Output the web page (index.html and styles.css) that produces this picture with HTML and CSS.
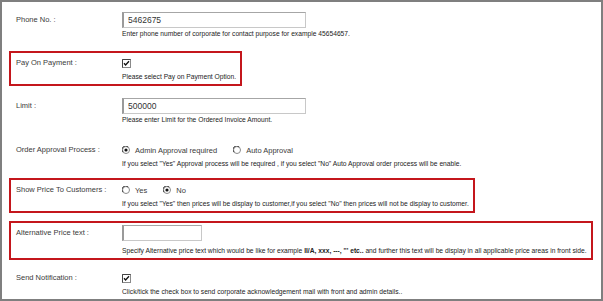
FILE: index.html
```html
<!DOCTYPE html>
<html>
<head>
<meta charset="utf-8">
<link rel="stylesheet" href="styles.css">
</head>
<body>
<div class="panel">
  <div class="row r-phone">
    <div class="label">Phone No. :</div>
    <div class="field">
      <div class="main"><input class="text wide" type="text" value="5462675"></div>
      <div class="help">Enter phone number of corporate for contact purpose for example 45654657.</div>
    </div>
  </div>

  <div class="row hl r-pay">
    <div class="label">Pay On Payment :</div>
    <div class="field">
      <div class="main">
        <svg class="check" width="9" height="9" viewBox="0 0 9 9"><rect x="0.5" y="0.5" width="8" height="8" fill="#fff" stroke="#8a8a8a"/><path d="M0.5 8.5V0.5H8.5" fill="none" stroke="#444"/><path d="M2 4.2L3.6 6L7 2.3" fill="none" stroke="#111" stroke-width="1.3"/></svg>
      </div>
      <div class="help">Please select Pay on Payment Option.</div>
    </div>
  </div>

  <div class="row r-limit">
    <div class="label">Limit :</div>
    <div class="field">
      <div class="main"><input class="text wide" type="text" value="500000"></div>
      <div class="help">Please enter Limit for the Ordered Invoice Amount.</div>
    </div>
  </div>

  <div class="row r-order">
    <div class="label">Order Approval Process :</div>
    <div class="field">
      <div class="main">
        <span class="opt"><svg class="radio" width="8" height="8" viewBox="0 0 8 8"><circle cx="4" cy="4" r="3.5" fill="#fff" stroke="#8a8a8a"/><path d="M1 6.2A3.3 3.3 0 0 1 6.2 1" fill="none" stroke="#444"/><circle cx="4" cy="4" r="1.6" fill="#111"/></svg>Admin Approval required</span>
        <span class="opt"><svg class="radio" width="8" height="8" viewBox="0 0 8 8"><circle cx="4" cy="4" r="3.5" fill="#fff" stroke="#8a8a8a"/><path d="M1 6.2A3.3 3.3 0 0 1 6.2 1" fill="none" stroke="#444"/></svg>Auto Approval</span>
      </div>
      <div class="help">If you select "Yes" Approval process will be required , if you select "No" Auto Approval order process will be enable.</div>
    </div>
  </div>

  <div class="row hl r-show">
    <div class="label">Show Price To Customers :</div>
    <div class="field">
      <div class="main">
        <span class="opt"><svg class="radio" width="8" height="8" viewBox="0 0 8 8"><circle cx="4" cy="4" r="3.5" fill="#fff" stroke="#8a8a8a"/><path d="M1 6.2A3.3 3.3 0 0 1 6.2 1" fill="none" stroke="#444"/></svg>Yes</span>
        <span class="opt"><svg class="radio" width="8" height="8" viewBox="0 0 8 8"><circle cx="4" cy="4" r="3.5" fill="#fff" stroke="#8a8a8a"/><path d="M1 6.2A3.3 3.3 0 0 1 6.2 1" fill="none" stroke="#444"/><circle cx="4" cy="4" r="1.6" fill="#111"/></svg>No</span>
      </div>
      <div class="help">If you select "Yes" then prices will be display to customer,if you select "No" then prices will not be display to customer.</div>
    </div>
  </div>

  <div class="row hl r-alt">
    <div class="label">Alternative Price text :</div>
    <div class="field">
      <div class="main"><input class="text short" type="text" value=""></div>
      <div class="help">Specify Alternative price text which would be like for example <b>II/A, xxx, ---, '''  etc..</b> and further this text will be display in all applicable price areas in front side.</div>
    </div>
  </div>

  <div class="row r-send">
    <div class="label">Send Notification :</div>
    <div class="field">
      <div class="main">
        <svg class="check" width="9" height="9" viewBox="0 0 9 9"><rect x="0.5" y="0.5" width="8" height="8" fill="#fff" stroke="#8a8a8a"/><path d="M0.5 8.5V0.5H8.5" fill="none" stroke="#444"/><path d="M2 4.2L3.6 6L7 2.3" fill="none" stroke="#111" stroke-width="1.3"/></svg>
      </div>
      <div class="help">Click/tick the check box to send corporate acknowledgement mail with front and admin details..</div>
    </div>
  </div>
</div>
</body>
</html>
```

FILE: styles.css
```css
html, body {
  margin: 0;
  padding: 0;
  background: #fff;
}

.panel {
  width: 603px;
  height: 301px;
  box-sizing: border-box;
  border: 2px solid #7f7f7f;
  padding: 6px 0 0 7px;
  background: #fff;
  font-family: "Liberation Sans", Arial, sans-serif;
  color: #333;
  overflow: hidden;
}

.row {
  display: grid;
  grid-template-columns: 106px max-content;
  width: max-content;
  border: 2px solid transparent;
  padding: 2px 4px 1px 5px;
  margin-bottom: 8px;
}

.row.hl {
  border-color: #c4161c;
}

.r-limit { margin-bottom: 9px; }
.r-order { margin-bottom: 5px; }
.r-alt { margin-bottom: 6px; }
.r-alt .help { margin-top: 4px; }

.label {
  font-size: 7.5px;
  line-height: 16px;
  color: #3a3a3a;
}

.main {
  height: 16px;
  display: flex;
  align-items: center;
  gap: 16px;
}

.help {
  font-size: 6.7px;
  line-height: 12px;
  color: #222;
  white-space: nowrap;
}

.help b {
  font-weight: bold;
}

.text {
  box-sizing: border-box;
  height: 16px;
  margin: 0;
  padding: 0 0 0 4px;
  border: 1px solid #c8c8c8;
  border-left: 2px solid #9a9a9a;
  border-top-color: #a6a6a6;
  background: #fff;
  font-family: "Liberation Sans", Arial, sans-serif;
  font-size: 8.5px;
  color: #333;
  outline: none;
}

.text.wide { width: 184px; }
.text.short { width: 80px; }

.check, .radio {
  display: block;
  flex: none;
}

.opt {
  display: flex;
  align-items: center;
  gap: 5px;
  font-size: 7.5px;
  color: #3a3a3a;
}
```
